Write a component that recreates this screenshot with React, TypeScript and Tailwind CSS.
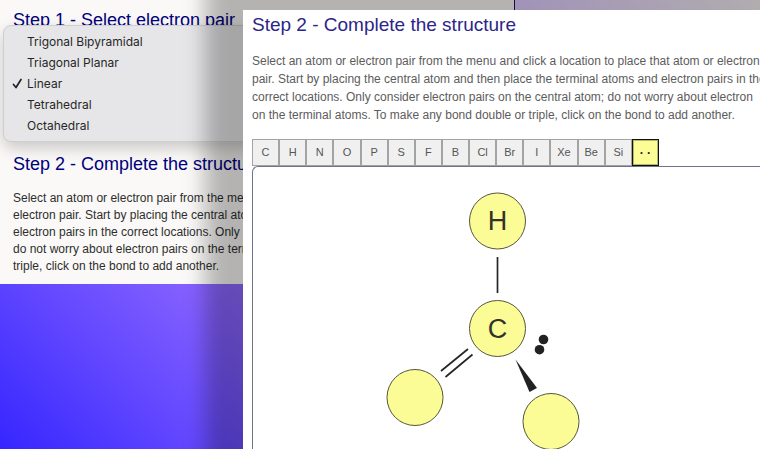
import { useState } from "react";

const geometries = ["Trigonal Bipyramidal", "Triagonal Planar", "Linear", "Tetrahedral", "Octahedral"];
const elements = ["C", "H", "N", "O", "P", "S", "F", "B", "Cl", "Br", "I", "Xe", "Be", "Si", "· ·"];

function GeometryMenu() {
  const [selected, setSelected] = useState("Linear");
  return (
    <div
      role="menu"
      aria-label="Electron pair geometry"
      className="absolute left-[3px] top-[25px] w-[320px] rounded-lg border border-[#cfcfcf] bg-[#e6e6e8] py-[5px] font-['Inter',sans-serif] text-[12px] leading-[21px] text-[#262626] shadow-[0_6px_16px_rgba(0,0,0,0.2)]"
    >
      {geometries.map((name) => (
        <button
          key={name}
          type="button"
          role="menuitemradio"
          aria-checked={selected === name}
          onClick={() => setSelected(name)}
          className="flex w-full items-center pl-2 text-left"
        >
          <span className="flex w-[15px] shrink-0">
            {selected === name && (
              <svg viewBox="0 0 11 11" className="size-[11px]" fill="none" stroke="#222" strokeWidth="1.7" strokeLinecap="round" strokeLinejoin="round" aria-hidden="true">
                <path d="M1.500 6.500 4 9.500 9 1.500" />
              </svg>
            )}
          </span>
          {name}
        </button>
      ))}
    </div>
  );
}

function StructureDrawing() {
  return (
    <svg width="400" height="300" viewBox="253 167 400 300" className="block" role="img" aria-label="Structure being built">
      <g stroke="#262626" strokeWidth="1.700">
        <path d="M497.500 257V293" />
        <path d="M468 349 441 371M472.500 354.500 445.500 377" />
      </g>
      <path d="M515.500 359.500 537 388 529.500 392Z" fill="#222" />
      <circle cx="543.500" cy="339.500" r="4.800" fill="#222" />
      <circle cx="539.500" cy="349.700" r="4.800" fill="#222" />
      <g fill="#fcfc97" stroke="#55553c" strokeWidth="1">
        <circle cx="497.500" cy="221" r="28" />
        <circle cx="497.500" cy="328.500" r="28" />
        <circle cx="415" cy="397.500" r="28" />
        <circle cx="551" cy="421.500" r="28" />
      </g>
      <g fill="#33332a" fontFamily="Liberation Sans, Arial, sans-serif" fontSize="27" textAnchor="middle">
        <text x="497.500" y="230">H</text>
        <text x="497.500" y="338">C</text>
      </g>
    </svg>
  );
}

export default function App() {
  const [element, setElement] = useState("· ·");
  return (
    <main className="relative h-screen overflow-hidden bg-[linear-gradient(45deg,#3626ff_0%,#5c43ff_14%,#8460ff_29%,#e0cdff_80%,#f5f0f3_100%)] font-['Liberation_Sans',Arial,sans-serif]">
      <section className="absolute left-0 top-0 w-[515px] border-r border-[#1c1850] bg-[#faf9f7] px-[13px] pb-[9px] pt-2">
        <h2 className="text-[18px] leading-6 text-[#00007d]">Step 1 - Select electron pair</h2>
        <h2 className="mt-[120px] text-[18px] leading-6 text-[#00007d]">Step 2 - Complete the structure</h2>
        <p className="mt-[14px] whitespace-nowrap text-[12px] leading-[17px] text-[#2e2e2e]">
          Select an atom or electron pair from the menu
          <br />
          electron pair. Start by placing the central atom
          <br />
          electron pairs in the correct locations. Only
          <br />
          do not worry about electron pairs on the terminal
          <br />
          triple, click on the bond to add another.
        </p>
      </section>
      <GeometryMenu />
      <section className="absolute left-[243px] top-[10px] h-full w-[640px] bg-white pl-[9px] shadow-[0_0_20px_38px_rgba(0,0,0,0.28)]">
        <h2 className="pt-[3px] text-[19px] leading-6 text-[#2b2588]">Step 2 - Complete the structure</h2>
        <p className="mt-[15px] whitespace-nowrap text-[12px] leading-[18px] text-[#5c5c5c]">
          Select an atom or electron pair from the menu and click a location to place that atom or electron
          <br />
          pair. Start by placing the central atom and then place the terminal atoms and electron pairs in the
          <br />
          correct locations. Only consider electron pairs on the central atom; do not worry about electron
          <br />
          on the terminal atoms. To make any bond double or triple, click on the bond to add another.
        </p>
        <div className="mt-[15px] grid w-[407px] grid-cols-15">
          {elements.map((symbol) => (
            <button
              key={symbol}
              type="button"
              aria-pressed={element === symbol}
              onClick={() => setElement(symbol)}
              className={
                element === symbol
                  ? "h-[27px] border border-[#111] bg-[#fdfd96] text-[12px] font-bold text-[#222] ring-1 ring-inset ring-[#111]/30"
                  : "h-[27px] border border-[#a3a3a3] bg-[#f0f0f0] text-[11px] text-[#555]"
              }
            >
              {symbol}
            </button>
          ))}
        </div>
        <div className="overflow-hidden rounded-tl-md border-l border-t border-[#70708f]">
          <StructureDrawing />
        </div>
      </section>
    </main>
  );
}
